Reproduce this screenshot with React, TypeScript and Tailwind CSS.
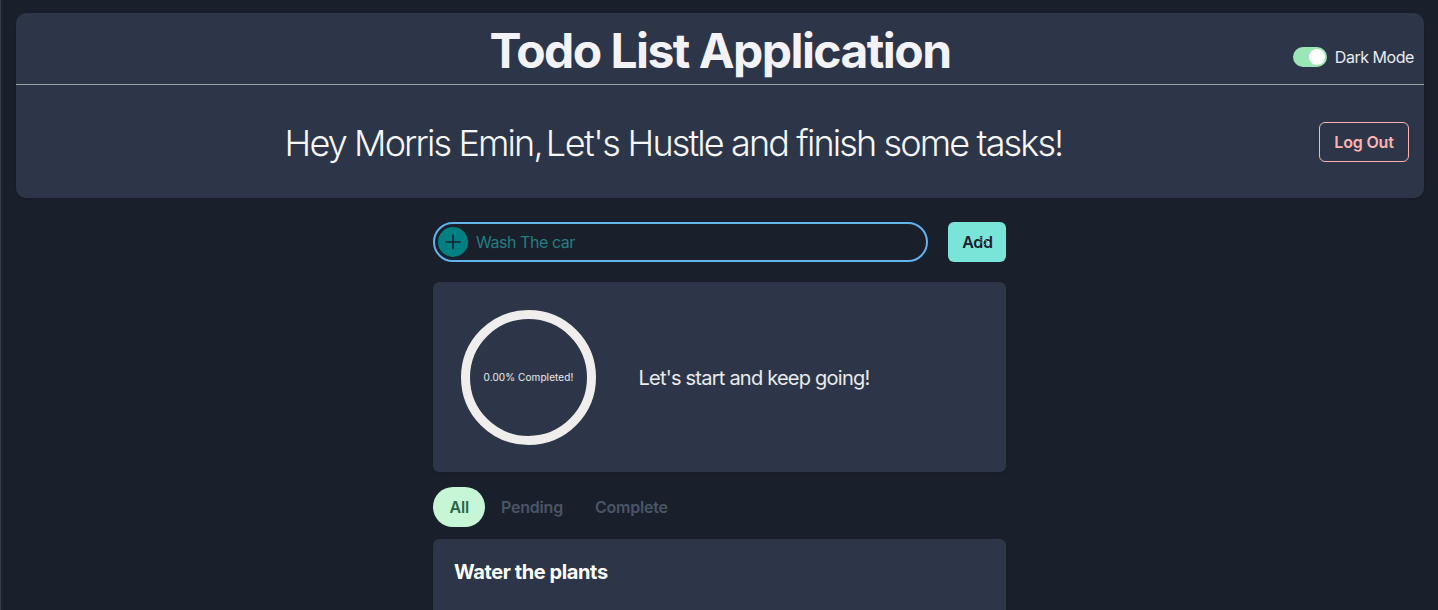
type Task = { id: number; title: string };

const tasks: Task[] = [{ id: 1, title: "Water the plants" }];
const filters = ["All", "Pending", "Complete"];

function ModeSwitch() {
  return (
    <label className="flex h-5 items-center gap-2">
      <span className="flex h-5 w-[34px] items-center justify-end rounded-full bg-[#9ae6b4] p-0.5">
        <span className="size-4 rounded-full bg-white" />
      </span>
      <span className="text-base tracking-[-0.45px] text-white/90">Dark Mode</span>
    </label>
  );
}

function Header() {
  return (
    <header className="mr-[15px] ml-4 h-[185px] rounded-[10px] bg-[#2d3648] shadow-sm">
      <div className="grid h-[72px] grid-cols-[1fr_auto_1fr] border-b border-[#9a9fa9]">
        <h1 className="col-start-2 pt-[9px] text-5xl leading-[58px] font-bold tracking-[-1.55px] whitespace-nowrap text-[#f3f2f6]">
          Todo List Application
        </h1>
        <div className="flex justify-end pt-[34px] pr-2.5">
          <ModeSwitch />
        </div>
      </div>
      <div className="flex h-[113px] items-center pr-[15px]">
        <p className="flex-1 pt-0.5 pl-3 text-center text-4xl font-light tracking-[-1.87px] text-[#f7f7fa]">
          Hey Morris Emin<span className="tracking-[-6px]">,</span>{" "}
          <span className="tracking-[-1.5px]">Let's</span> Hustle and finish some tasks!
        </p>
        <button className="h-10 w-[90px] rounded-md border border-[#feb2b2] text-base font-semibold tracking-[-0.15px] text-[#feb2b2]">
          Log Out
        </button>
      </div>
    </header>
  );
}

function AddTask() {
  return (
    <div className="flex gap-5">
      <div className="flex h-10 w-[495px] items-center gap-2 rounded-full border-2 border-[#63b3ed] pl-[3px]">
        <svg viewBox="0 0 30 30" className="size-[30px]">
          <circle cx="15" cy="15" r="15" fill="#008080" />
          <path d="M15 8v14M8 15h14" stroke="#1a202c" strokeWidth="1.5" strokeLinecap="round" />
        </svg>
        <span className="text-base tracking-[-0.45px] text-[#237f80]">Wash The car</span>
      </div>
      <button className="relative h-10 w-[58px] rounded-md bg-[#79e5d8] pl-px text-base font-semibold tracking-[-0.3px] text-[#1a202c]">
        Add
        <svg viewBox="0 0 10 12" className="absolute top-[14px] left-8 h-3 w-2.5">
          <path
            d="M1 1v7M3.5 4v1M6 4v1M8.5 5v3M4 8l1 2"
            fill="none"
            stroke="#ffffff"
            strokeWidth="0.8"
            strokeDasharray="1 1.3"
          />
        </svg>
      </button>
    </div>
  );
}

function Progress() {
  return (
    <section className="mt-5 flex h-[190px] items-center rounded-md bg-[#2d3648] pl-7 shadow-sm">
      <div className="flex size-[135px] items-center justify-center rounded-full border-[9px] border-[#efeeec] text-[10px] tracking-[0.1px] whitespace-nowrap text-white/90">
        0.00% Completed!
      </div>
      <p className="ml-[42.5px] pt-0.5 text-xl tracking-[-0.77px] text-white/90">
        Let's start and keep going!
      </p>
    </section>
  );
}

function FilterTabs() {
  return (
    <nav className="mt-[15px] flex h-10">
      {filters.map((name, i) => (
        <button
          key={name}
          className={
            i === 0
              ? "rounded-full bg-[#c6f6d5] pr-4 pl-[16.5px] font-semibold tracking-[-0.2px] text-[#276749]"
              : "rounded-full px-4 font-semibold tracking-[-0.2px] text-[#4a5568]"
          }
        >
          {name}
        </button>
      ))}
    </nav>
  );
}

export default function App() {
  return (
    <div className="h-[610px] overflow-hidden border-l border-[#353d49] bg-[#1a202b] pt-[13px] font-['Inter',sans-serif]">
      <div className="-mr-px -ml-px">
        <Header />
        <main className="mx-auto mt-6 w-[573px]">
          <AddTask />
          <Progress />
          <FilterTabs />
          {tasks.map((task) => (
            <article key={task.id} className="mt-3 h-24 rounded-md bg-[#2d3648] px-[21px] pt-[21px] shadow-sm">
              <h2 className="text-xl leading-6 font-bold tracking-[-0.4px] text-white">{task.title}</h2>
            </article>
          ))}
        </main>
      </div>
    </div>
  );
}
